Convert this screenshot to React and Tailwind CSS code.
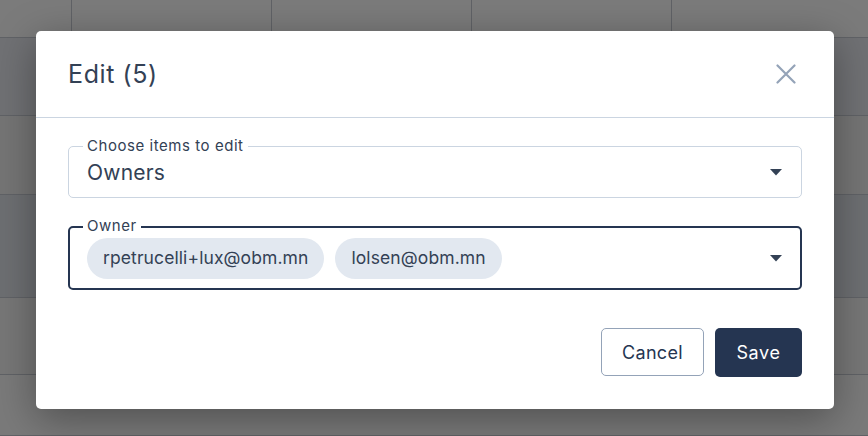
import React from "react";

const rows = [38, 78, 79, 103, 77, 61];
const cols = [72, 200, 200, 200, 196];

function Background() {
  const rowBg = ["bg-[#7b7b7b]", "bg-[#707174]", "bg-[#757575]", "bg-[#6d6f72]", "bg-[#777777]", "bg-[#7a7a7a]"];
  return (
    <div className="flex flex-col w-[868px] h-[436px] overflow-hidden">
      {rows.map((h, i) => (
        <div
          key={i}
          className={`flex shrink-0 border-b border-[#606266] ${rowBg[i]}`}
          style={{ height: h }}
        >
          {cols.map((w, j) => (
            <div
              key={j}
              className={`shrink-0 h-full ${i === 0 && j < 4 ? "border-r border-[#606266]" : ""}`}
              style={{ width: w }}
            />
          ))}
        </div>
      ))}
    </div>
  );
}

function Caret() {
  return (
    <svg width="12" height="7" viewBox="0 0 12 7" className="shrink-0">
      <path d="M0 0 L12 0 L6 6.5 Z" fill="#334155" />
    </svg>
  );
}

function Chip({ children }) {
  return (
    <div className="h-[41px] px-4 rounded-full bg-[#e2e8f0] flex items-center text-[17.5px] tracking-[0.1px] text-[#334155] leading-none">
      {children}
    </div>
  );
}

export default function App() {
  return (
    <div className="relative w-[868px] h-[436px] overflow-hidden" style={{ fontFamily: "Inter, 'Noto Sans', sans-serif" }}>
      <Background />
      <div className="absolute inset-0 flex justify-center pt-[31px] pl-[2px]">
        <div className="w-[798px] h-[378px] bg-white rounded-[5px] shadow-[0_10px_40px_rgba(0,0,0,0.35)] flex flex-col">
          <div className="h-[87px] shrink-0 flex items-center justify-between pl-8 pr-[38px] border-b border-[#cbd5e1]">
            <h2 className="text-[25px] tracking-[0.6px] text-[#334155] font-normal leading-none">Edit (5)</h2>
            <svg width="20" height="20" viewBox="0 0 20 20" className="shrink-0">
              <path d="M1.5 1.5 L18.5 18.5 M18.5 1.5 L1.5 18.5" stroke="#94a3b8" strokeWidth="2.2" strokeLinecap="round" />
            </svg>
          </div>
          <div className="flex flex-col px-8 pt-7">
            <div className="relative h-[52px] border border-[#cbd5e1] rounded-[5px] flex items-center pl-[18px] pr-[19px] justify-between">
              <span className="absolute left-[14px] top-[-11px] px-1 bg-white text-[15px] tracking-[0.55px] leading-5 text-[#334155]">
                Choose items to edit
              </span>
              <span className="text-[21px] tracking-[0.2px] text-[#334155] leading-none">Owners</span>
              <Caret />
            </div>
            <div className="relative mt-7 h-[64px] border-2 border-[#253551] rounded-[5px] flex items-center pl-[17px] pr-[18px] justify-between">
              <span className="absolute left-[13px] top-[-12px] px-1 bg-white text-[15px] tracking-[0.55px] leading-5 text-[#334155]">
                Owner
              </span>
              <div className="flex gap-[11px]">
                <Chip>rpetrucelli+lux@obm.mn</Chip>
                <Chip>lolsen@obm.mn</Chip>
              </div>
              <Caret />
            </div>
            <div className="flex justify-end gap-[11px] mt-[38px]">
              <button className="h-[48px] w-[103px] border border-[#94a3b8] rounded-[5px] text-[18px] tracking-[0.3px] text-[#253551] bg-white">
                Cancel
              </button>
              <button className="h-[49px] w-[87px] rounded-[5px] text-[18px] tracking-[0.6px] text-white bg-[#253551]">
                Save
              </button>
            </div>
          </div>
        </div>
      </div>
    </div>
  );
}
